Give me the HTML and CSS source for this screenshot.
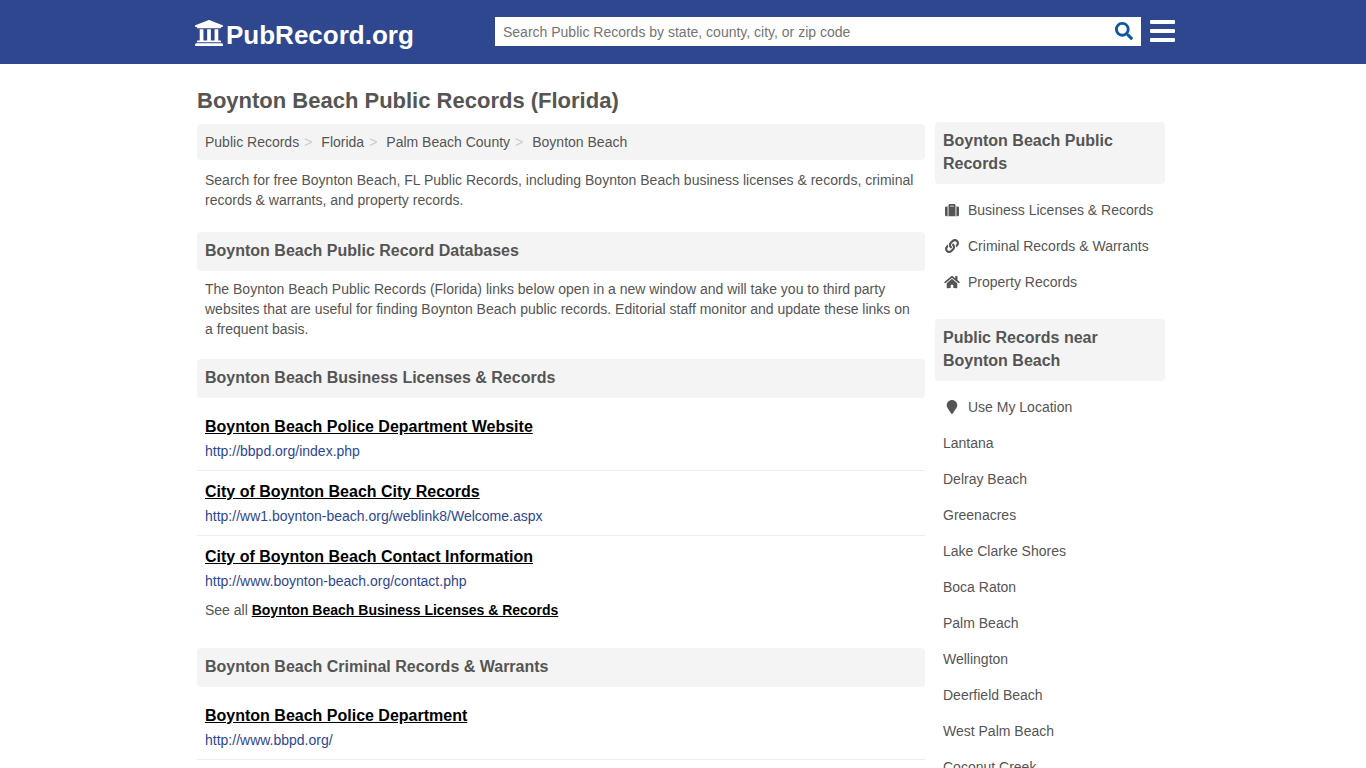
FILE: index.html
```html
<!DOCTYPE html>
<html lang="en">
<head>
    <meta charset="UTF-8">
    <meta name="viewport" content="width=device-width, initial-scale=1.0">
    <title>Boynton Beach Public Records (Florida)</title>
    <link rel="stylesheet" href="styles.css">
</head>
<body>
    <header class="site-header">
        <div class="header-inner">
            <a class="logo" href="#">
                <svg class="logo-icon" viewBox="16 32 480 448" aria-hidden="true"><path d="M496 128v16a8 8 0 0 1-8 8h-24v12c0 6.627-5.373 12-12 12H60c-6.627 0-12-5.373-12-12v-12H24a8 8 0 0 1-8-8v-16a8 8 0 0 1 4.941-7.392l232-88a7.996 7.996 0 0 1 6.118 0l232 88A8 8 0 0 1 496 128zm-24 304H40c-13.255 0-24 10.745-24 24v16a8 8 0 0 0 8 8h464a8 8 0 0 0 8-8v-16c0-13.255-10.745-24-24-24zM96 192v192H60c-6.627 0-12 5.373-12 12v20h416v-20c0-6.627-5.373-12-12-12h-36V192h-64v192h-64V192h-64v192h-64V192H96z"/></svg>
                <span>PubRecord.org</span>
            </a>
            <form class="search">
                <input type="text" class="search-input" name="q" aria-label="Search Public Records" placeholder="Search Public Records by state, county, city, or zip code">
                <button type="button" class="search-button" aria-label="Search">
                    <svg viewBox="0 0 512 512" aria-hidden="true"><path d="M505 442.7L405.3 343c-4.5-4.5-10.6-7-17-7H372c27.6-35.3 44-79.7 44-128C416 93.1 322.9 0 208 0S0 93.1 0 208s93.1 208 208 208c48.3 0 92.7-16.4 128-44v16.3c0 6.4 2.5 12.5 7 17l99.7 99.7c9.4 9.4 24.6 9.4 33.9 0l28.3-28.3c9.4-9.4 9.4-24.6.1-34zM208 336c-70.7 0-128-57.2-128-128 0-70.7 57.2-128 128-128 70.7 0 128 57.2 128 128 0 70.7-57.2 128-128 128z"/></svg>
                </button>
            </form>
            <button type="button" class="menu-button" aria-label="Menu">
                <svg viewBox="0 0 25 22" aria-hidden="true"><path d="M1 0h23a1 1 0 0 1 1 1v2a1 1 0 0 1-1 1H1a1 1 0 0 1-1-1V1a1 1 0 0 1 1-1zM1 9h23a1 1 0 0 1 1 1v2a1 1 0 0 1-1 1H1a1 1 0 0 1-1-1v-2a1 1 0 0 1 1-1zM1 18h23a1 1 0 0 1 1 1v2a1 1 0 0 1-1 1H1a1 1 0 0 1-1-1v-2a1 1 0 0 1 1-1z"/></svg>
            </button>
        </div>
    </header>

    <div class="container">
        <main class="content">
            <h1>Boynton Beach Public Records (Florida)</h1>
            <nav aria-label="Breadcrumb">
                <ol class="breadcrumb">
                    <li><a href="#">Public Records</a></li>
                    <li><a href="#">Florida</a></li>
                    <li><a href="#">Palm Beach County</a></li>
                    <li><a href="#">Boynton Beach</a></li>
                </ol>
            </nav>
            <p class="intro">Search for free Boynton Beach, FL Public Records, including Boynton Beach business licenses &amp; records, criminal records &amp; warrants, and property records.</p>

            <section>
                <h2>Boynton Beach Public Record Databases</h2>
                <p class="text">The Boynton Beach Public Records (Florida) links below open in a new window and will take you to third party websites that are useful for finding Boynton Beach public records. Editorial staff monitor and update these links on a frequent basis.</p>
            </section>

            <section>
                <h2>Boynton Beach Business Licenses &amp; Records</h2>
                <ul class="records">
                    <li>
                        <a class="record-title" href="#">Boynton Beach Police Department Website</a>
                        <span class="record-url">http://bbpd.org/index.php</span>
                    </li>
                    <li>
                        <a class="record-title" href="#">City of Boynton Beach City Records</a>
                        <span class="record-url">http://ww1.boynton-beach.org/weblink8/Welcome.aspx</span>
                    </li>
                    <li class="last">
                        <a class="record-title" href="#">City of Boynton Beach Contact Information</a>
                        <span class="record-url">http://www.boynton-beach.org/contact.php</span>
                    </li>
                </ul>
                <p class="see-all">See all <a href="#">Boynton Beach Business Licenses &amp; Records</a></p>
            </section>

            <section>
                <h2>Boynton Beach Criminal Records &amp; Warrants</h2>
                <ul class="records">
                    <li>
                        <a class="record-title" href="#">Boynton Beach Police Department</a>
                        <span class="record-url">http://www.bbpd.org/</span>
                    </li>
                </ul>
            </section>
        </main>

        <aside class="sidebar">
            <section>
                <h2>Boynton Beach Public Records</h2>
                <ul class="side-links">
                    <li><a href="#">
                        <svg viewBox="0 0 512 512" aria-hidden="true"><path d="M128 480h256V80c0-26.5-21.5-48-48-48H176c-26.5 0-48 21.5-48 48v400zm64-384h128v32H192V96zm320 80v256c0 26.5-21.5 48-48 48h-48V128h48c26.5 0 48 21.5 48 48zM96 480H48c-26.5 0-48-21.5-48-48V176c0-26.5 21.5-48 48-48h48v352z"/></svg>
                        Business Licenses &amp; Records
                    </a></li>
                    <li><a href="#">
                        <svg viewBox="0 0 512 512" aria-hidden="true"><path d="M326.612 185.391c59.747 59.809 58.927 155.698.36 214.59-.11.12-.24.25-.36.37l-67.2 67.2c-59.27 59.27-155.699 59.262-214.96 0-59.27-59.26-59.27-155.7 0-214.96l37.106-37.106c9.84-9.84 26.786-3.3 27.294 10.606.648 17.722 3.826 35.527 9.69 52.721 1.986 5.822.567 12.262-3.783 16.612l-13.087 13.087c-28.026 28.026-28.905 73.66-1.155 101.96 28.024 28.579 74.086 28.749 102.325.51l67.2-67.19c28.191-28.191 28.073-73.757 0-101.83-3.701-3.694-7.429-6.564-10.341-8.569a16.037 16.037 0 0 1-6.947-12.606c-.396-10.567 3.348-21.456 11.698-29.806l21.054-21.055c5.521-5.521 14.182-6.199 20.584-1.731a152.482 152.482 0 0 1 20.522 17.197zM467.547 44.449c-59.261-59.262-155.69-59.27-214.96 0l-67.2 67.2c-.12.12-.25.25-.36.37-58.566 58.892-59.387 154.781.36 214.59a152.454 152.454 0 0 0 20.521 17.196c6.402 4.468 15.064 3.789 20.584-1.731l21.054-21.055c8.35-8.35 12.094-19.239 11.698-29.806a16.037 16.037 0 0 0-6.947-12.606c-2.912-2.005-6.64-4.875-10.341-8.569-28.073-28.073-28.191-73.639 0-101.83l67.2-67.19c28.239-28.239 74.3-28.069 102.325.51 27.75 28.3 26.872 73.934-1.155 101.96l-13.087 13.087c-4.35 4.35-5.769 10.79-3.783 16.612 5.864 17.194 9.042 34.999 9.69 52.721.509 13.906 17.454 20.446 27.294 10.606l37.106-37.106c59.271-59.259 59.271-155.699.001-214.959z"/></svg>
                        Criminal Records &amp; Warrants
                    </a></li>
                    <li><a href="#">
                        <svg viewBox="0 0 576 512" aria-hidden="true"><path d="M280.37 148.26L96 300.11V464a16 16 0 0 0 16 16l112.06-.29a16 16 0 0 0 15.92-16V368a16 16 0 0 1 16-16h64a16 16 0 0 1 16 16v95.64a16 16 0 0 0 16 16.05L464 480a16 16 0 0 0 16-16V300L295.67 148.26a12.19 12.19 0 0 0-15.3 0zM571.6 251.47L488 182.56V44.05a12 12 0 0 0-12-12h-56a12 12 0 0 0-12 12v72.61L318.47 43a48 48 0 0 0-61 0L4.34 251.47a12 12 0 0 0-1.6 16.9l25.5 31A12 12 0 0 0 45.15 301l235.22-193.74a12.19 12.19 0 0 1 15.3 0L530.9 301a12 12 0 0 0 16.9-1.6l25.5-31a12 12 0 0 0-1.7-16.93z"/></svg>
                        Property Records
                    </a></li>
                </ul>
            </section>

            <section>
                <h2>Public Records near Boynton Beach</h2>
                <ul class="side-links">
                    <li><a href="#">
                        <svg viewBox="0 0 384 512" aria-hidden="true"><path d="M172.268 501.67C26.97 291.031 0 269.413 0 192 0 85.961 85.961 0 192 0s192 85.961 192 192c0 77.413-26.97 99.031-172.268 309.67-9.535 13.774-29.93 13.773-39.464 0z"/></svg>
                        Use My Location
                    </a></li>
                    <li><a href="#">Lantana</a></li>
                    <li><a href="#">Delray Beach</a></li>
                    <li><a href="#">Greenacres</a></li>
                    <li><a href="#">Lake Clarke Shores</a></li>
                    <li><a href="#">Boca Raton</a></li>
                    <li><a href="#">Palm Beach</a></li>
                    <li><a href="#">Wellington</a></li>
                    <li><a href="#">Deerfield Beach</a></li>
                    <li><a href="#">West Palm Beach</a></li>
                    <li><a href="#">Coconut Creek</a></li>
                </ul>
            </section>
        </aside>
    </div>
</body>
</html>
```
FILE: styles.css
```css
* {
    box-sizing: border-box;
}

body {
    margin: 0;
    font-family: "Liberation Sans", Arial, sans-serif;
    font-size: 14px;
    line-height: 20px;
    color: #555;
    background-color: #fff;
}

a {
    color: inherit;
    text-decoration: none;
}

ul, ol {
    list-style: none;
    margin: 0;
    padding: 0;
}

svg {
    display: block;
    fill: currentColor;
}

/* header */
.site-header {
    background-color: #2e478f;
    color: #fff;
}

.header-inner {
    display: flex;
    align-items: center;
    max-width: 984px;
    height: 64px;
    margin: 0 auto;
    padding: 0 0 2px 4px;
}

.logo {
    display: flex;
    align-items: center;
    width: 300px;
    padding-top: 8px;
    font-size: 26px;
    line-height: 30px;
    font-weight: bold;
}

.logo-icon {
    width: 28px;
    height: 26px;
    margin: 0 3px 4px 0;
}

.search {
    display: flex;
    flex: 1;
    height: 29px;
    background-color: #fff;
}

.search-input {
    flex: 1;
    min-width: 0;
    padding: 2px 8px 0;
    border: 0;
    background: none;
    font: inherit;
    color: #555;
}

.search-input::placeholder {
    color: #757575;
}

.search-button, .menu-button {
    padding: 0;
    border: 0;
    background: none;
    cursor: pointer;
}

.search-button {
    padding: 0 8px;
    color: #0f579f;
}

.search-button svg {
    width: 18px;
    height: 18px;
}

.menu-button {
    margin-left: 9px;
    color: #fff;
}

.menu-button svg {
    width: 25px;
    height: 22px;
}

/* page columns */
.container {
    display: flex;
    gap: 10px;
    max-width: 980px;
    margin: 0 auto;
    padding: 0 8px 20px 4px;
}

.content {
    flex: 1;
    min-width: 0;
    padding-top: 23px;
}

.sidebar {
    width: 230px;
    padding-top: 58px;
}

h1 {
    margin: 0 0 9px;
    font-size: 22px;
    line-height: 28px;
}

h2 {
    margin: 0;
    padding: 7px 8px 9px;
    border-radius: 4px;
    background-color: #f4f4f4;
    font-size: 16px;
    line-height: 23px;
}

.breadcrumb {
    display: flex;
    flex-wrap: wrap;
    padding: 8px;
    border-radius: 4px;
    background-color: #f4f4f4;
}

.breadcrumb li + li::before {
    content: ">";
    margin: 0 9px 0 5px;
    color: #ccc;
}

.intro {
    margin: 0;
    padding: 10px 8px 22px;
}

.text {
    margin: 0;
    padding: 8px 8px 20px;
}

/* record lists */
.records {
    padding-top: 8px;
}

.records li {
    padding: 9px 8px;
    border-bottom: 1px solid #eee;
}

.records .last {
    border-bottom: 0;
}

.record-title {
    display: table;
    margin-bottom: 2px;
    color: #000;
    font-size: 16px;
    line-height: 24px;
    font-weight: bold;
    text-decoration: underline;
}

.record-url {
    display: block;
    color: #2e478f;
}

.see-all {
    margin: 0;
    padding: 0 8px 28px;
}

.see-all a {
    color: #000;
    font-weight: bold;
    text-decoration: underline;
}

/* sidebar lists */
.side-links {
    padding: 8px 0 19px;
}

.side-links a {
    display: flex;
    align-items: center;
    padding: 8px;
}

.side-links svg {
    width: 18px;
    height: 14px;
    margin-right: 7px;
}
```
